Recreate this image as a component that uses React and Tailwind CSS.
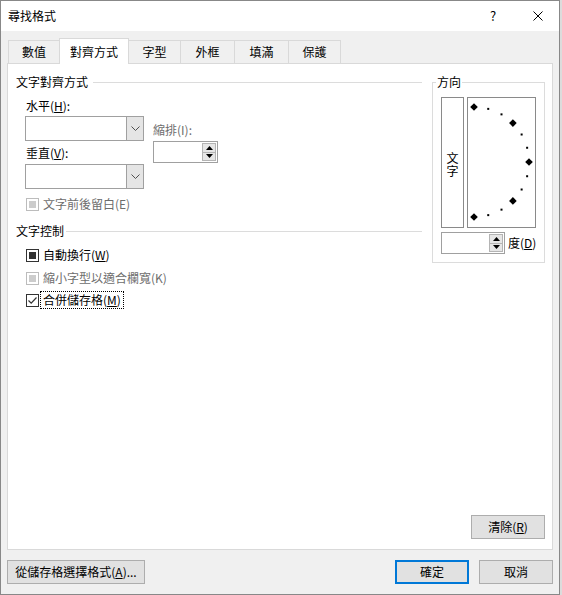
import React from "react";

function Combo() {
  return (
    <div className="flex h-[25px] w-[119px] border border-[#a0a0a0] bg-white">
      <div className="flex-1" />
      <div className="flex w-[17px] items-center justify-center border-l border-[#a0a0a0] bg-[#e5e5e5]">
        <svg width="9" height="5" viewBox="0 0 9 5">
          <path d="M0.5 0.5 L4.5 4.5 L8.5 0.5" fill="none" stroke="#505050" strokeWidth="1" />
        </svg>
      </div>
    </div>
  );
}

function SpinButtons() {
  return (
    <div className="flex w-[15px] flex-col py-[1px] pr-[1px]">
      <div className="flex flex-1 items-center justify-center border border-[#b4b4b4] bg-[#e6e6e6]">
        <svg width="7" height="4" viewBox="0 0 7 4">
          <polygon points="0,4 3.5,0 7,4" fill="#000" />
        </svg>
      </div>
      <div className="flex flex-1 items-center justify-center border border-t-0 border-[#b4b4b4] bg-[#e6e6e6]">
        <svg width="7" height="4" viewBox="0 0 7 4">
          <polygon points="0,0 3.5,4 7,0" fill="#000" />
        </svg>
      </div>
    </div>
  );
}

function Box({ kind }) {
  if (kind === "disabled") {
    return (
      <div className="flex h-[13px] w-[13px] shrink-0 items-center justify-center border border-[#bcbcbc] bg-white">
        <div className="h-[7px] w-[7px] bg-[#cccccc]" />
      </div>
    );
  }
  if (kind === "mixed") {
    return (
      <div className="flex h-[13px] w-[13px] shrink-0 items-center justify-center border border-[#333333] bg-white">
        <div className="h-[7px] w-[7px] bg-[#333333]" />
      </div>
    );
  }
  return (
    <div className="flex h-[13px] w-[13px] shrink-0 items-center justify-center border border-[#333333] bg-white">
      <svg width="11" height="11" viewBox="0 0 11 11">
        <path d="M1.5 5.5 L4.2 8.2 L9.5 2.5" fill="none" stroke="#333333" strokeWidth="1.2" />
      </svg>
    </div>
  );
}

function Dial() {
  const cx = 6;
  const cy = 64;
  const r = 55;
  const big = [90, 45, 0, -45, -90];
  const small = [75, 60, 30, 15, -15, -30, -60, -75];
  const pt = (a) => {
    const rad = (a * Math.PI) / 180;
    return [cx + r * Math.cos(rad), cy - r * Math.sin(rad)];
  };
  return (
    <svg width="67" height="129" viewBox="0 0 67 129">
      {big.map((a) => {
        const [x, y] = pt(a);
        return (
          <polygon
            key={"b" + a}
            points={`${x},${y - 3.8} ${x + 3.8},${y} ${x},${y + 3.8} ${x - 3.8},${y}`}
            fill="#000"
          />
        );
      })}
      {small.map((a) => {
        const [x, y] = pt(a);
        return <rect key={"s" + a} x={x - 1} y={y - 1} width="2" height="2" fill="#000" />;
      })}
    </svg>
  );
}

const tabs = [
  { label: "數值", w: "w-[52px]", first: true },
  { label: "對齊方式", w: "w-[70px]", sel: true },
  { label: "字型", w: "w-[53px]" },
  { label: "外框", w: "w-[55px]" },
  { label: "填滿", w: "w-[55px]" },
  { label: "保護", w: "w-[53px]" },
];

export default function App() {
  return (
    <div className="h-[595px] w-[562px] bg-[#dcdcdc] font-['Noto_Sans_CJK_TC','Noto_Sans',sans-serif] text-[12px] text-black">
      <div className="flex h-[595px] w-[560px] flex-col border border-[#888888] bg-[#f0f0f0]">
        {/* title bar */}
        <div className="flex h-[30px] shrink-0 items-center bg-white pb-[1px] leading-[16px]">
          <span className="pl-[7px]">尋找格式</span>
          <span className="ml-auto w-[14px] text-center text-[13px]">?</span>
          <svg className="ml-[33px] mr-[16px]" width="10" height="10" viewBox="0 0 10 10">
            <path d="M0.5 0.5 L9.5 9.5 M9.5 0.5 L0.5 9.5" stroke="#000" strokeWidth="1" />
          </svg>
        </div>

        {/* body */}
        <div className="flex flex-1 flex-col px-[6px] pt-[7px] pb-[10px]">
          {/* tabs */}
          <div className="ml-[1px] flex h-[25px] items-end">
            {tabs.map((t) =>
              t.sel ? (
                <div
                  key={t.label}
                  className={`relative z-10 -mb-px -ml-px flex h-[26px] items-center justify-center border border-b-0 border-[#d9d9d9] bg-white leading-[16px] ${t.w}`}
                >
                  {t.label}
                </div>
              ) : (
                <div
                  key={t.label}
                  className={`flex h-[23px] items-center justify-center border border-b-0 border-[#d9d9d9] bg-[#f0f0f0] leading-[16px] ${t.first ? "" : "-ml-px"} ${t.w}`}
                >
                  {t.label}
                </div>
              )
            )}
          </div>

          {/* panel */}
          <div className="flex flex-1 flex-col border border-[#d9d9d9] bg-white">
            <div className="flex flex-1 pl-[8px] pt-[10px]">
              {/* left column */}
              <div className="w-[406px]">
                <div className="flex h-[16px] items-center leading-[16px]">
                  <span>文字對齊方式</span>
                  <div className="ml-[5px] h-px flex-1 bg-[#dcdcdc]" />
                </div>
                <div className="mt-[8px] flex pl-[9px]">
                  <div className="w-[119px]">
                    <div className="pl-[1px] leading-[16px]">
                      水平(<u>H</u>):
                    </div>
                    <div className="mt-[2px]">
                      <Combo />
                    </div>
                    <div className="mt-[4px] pl-[1px] leading-[16px]">
                      垂直(<u>V</u>):
                    </div>
                    <div className="mt-[3px]">
                      <Combo />
                    </div>
                  </div>
                  <div className="ml-[9px] pt-[24px]">
                    <div className="leading-[16px] text-[#6d6d6d]">縮排(I):</div>
                    <div className="mt-[3px] flex h-[22px] w-[65px] border border-[#a0a0a0] bg-white">
                      <div className="flex-1" />
                      <SpinButtons />
                    </div>
                  </div>
                </div>
                <div className="mt-[7px] flex h-[16px] items-center pl-[10px]">
                  <Box kind="disabled" />
                  <span className="ml-[4px] leading-[16px] text-[#6d6d6d]">文字前後留白(E)</span>
                </div>

                <div className="mt-[11px] flex h-[16px] items-center leading-[16px]">
                  <span>文字控制</span>
                  <div className="ml-[2px] h-px flex-1 bg-[#dcdcdc]" />
                </div>
                <div className="mt-[8px] flex h-[16px] items-center pl-[10px]">
                  <Box kind="mixed" />
                  <span className="ml-[4px] leading-[16px]">
                    自動換行(<u>W</u>)
                  </span>
                </div>
                <div className="mt-[7px] flex h-[16px] items-center pl-[10px]">
                  <Box kind="disabled" />
                  <span className="ml-[4px] leading-[16px] text-[#6d6d6d]">縮小字型以適合欄寬(K)</span>
                </div>
                <div className="mt-[5px] flex items-center pl-[10px]">
                  <Box kind="checked" />
                  <span className="ml-[1px] border border-dotted border-black pl-[2px] pr-[2px] leading-[16px]">
                    合併儲存格(<u>M</u>)
                  </span>
                </div>
              </div>

              {/* direction */}
              <fieldset className="ml-[10px] w-[113px] self-start border border-[#dcdcdc] p-0">
                <legend className="ml-[3px] px-[1px] leading-[16px]">方向</legend>
                <div className="px-[8px] pt-[7px] pb-[8px]">
                  <div className="flex">
                    <div className="flex h-[131px] w-[23px] flex-col items-center justify-center border border-[#8a8a8a] pt-[2px]">
                      <span className="block h-[13px] leading-[13px]">文</span>
                      <span className="block h-[13px] leading-[13px]">字</span>
                    </div>
                    <div className="ml-[3px] h-[131px] w-[69px] border border-[#8a8a8a]">
                      <Dial />
                    </div>
                  </div>
                  <div className="mt-[4px] flex items-center whitespace-nowrap">
                    <div className="flex h-[22px] w-[64px] shrink-0 border border-[#a0a0a0] bg-white">
                      <div className="flex-1" />
                      <SpinButtons />
                    </div>
                    <span className="ml-[3px] shrink-0 whitespace-nowrap leading-[16px]">
                      度(<u>D</u>)
                    </span>
                  </div>
                </div>
              </fieldset>
            </div>

            <div className="flex justify-end pr-[7px] pb-[10px]">
              <div className="flex h-[24px] w-[74px] items-center justify-center border border-[#adadad] bg-[#e1e1e1] leading-[16px]">
                清除(<u>R</u>)
              </div>
            </div>
          </div>

          {/* bottom buttons */}
          <div className="mt-[10px] flex h-[24px] shrink-0">
            <div className="flex w-[138px] items-center justify-center border border-[#adadad] bg-[#e1e1e1] leading-[16px]">
              從儲存格選擇格式(<u>A</u>)...
            </div>
            <div className="ml-auto flex w-[74px] items-center justify-center border-2 border-[#0078d7] bg-[#e1e1e1] leading-[16px]">
              確定
            </div>
            <div className="ml-[10px] flex w-[74px] items-center justify-center border border-[#adadad] bg-[#e1e1e1] leading-[16px]">
              取消
            </div>
          </div>
        </div>
      </div>
    </div>
  );
}
